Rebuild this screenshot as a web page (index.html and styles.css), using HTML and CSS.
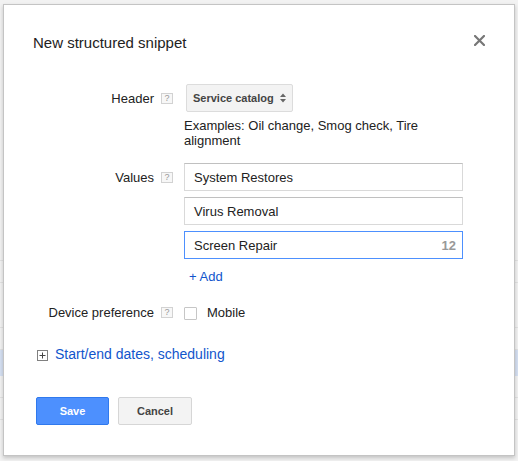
FILE: index.html
```html
<!DOCTYPE html>
<html lang="en">
<head>
<meta charset="utf-8">
<title>New structured snippet</title>
<link rel="stylesheet" href="styles.css">
</head>
<body>
<div class="backdrop">
  <div class="bd-space"></div>
  <div class="bd-row"></div>
  <div class="bd-row"></div>
  <div class="bd-row tall"></div>
  <div class="bd-row"></div>
  <div class="bd-sel"></div>
  <div class="bd-row"></div>
  <div class="bd-row"></div>
</div>

<div class="dialog" role="dialog" aria-label="New structured snippet">
  <div class="dialog-head">
    <h1 class="title">New structured snippet</h1>
    <button class="close" aria-label="Close">
      <svg width="11" height="11" viewBox="0 0 11 11"><path d="M1 1L10 10M10 1L1 10" stroke="#777" stroke-width="2.2" stroke-linecap="square"/></svg>
    </button>
  </div>

  <div class="form">
    <div class="label">Header</div>
    <div class="help"><span class="help-box">?</span></div>
    <div class="field">
      <div class="select">
        <span>Service catalog</span>
        <svg width="6" height="10" viewBox="0 0 6 10"><path d="M0 4L3 0.5L6 4Z M0 6L3 9.5L6 6Z" fill="#666"/></svg>
      </div>
      <div class="examples">Examples: Oil change, Smog check, Tire alignment</div>
    </div>

    <div class="label">Values</div>
    <div class="help"><span class="help-box">?</span></div>
    <div class="field">
      <div class="inputs">
        <div class="input"><span>System Restores</span></div>
        <div class="input"><span>Virus Removal</span></div>
        <div class="input focus"><span>Screen Repair</span><span class="count">12</span></div>
      </div>
      <a class="add" href="#">+ Add</a>
    </div>

    <div class="label">Device preference</div>
    <div class="help"><span class="help-box">?</span></div>
    <div class="field device-field">
      <span class="checkbox"></span>
      <span class="check-label">Mobile</span>
    </div>
  </div>

  <div class="schedule">
    <svg width="11" height="11" viewBox="0 0 11 11"><rect x="0.5" y="0.5" width="10" height="10" fill="#fff" stroke="#808080"/><path d="M2.5 5.5H8.5M5.5 2.5V8.5" stroke="#444" stroke-width="1"/></svg>
    <a class="schedule-link" href="#">Start/end dates, scheduling</a>
  </div>

  <div class="actions">
    <button class="btn save">Save</button>
    <button class="btn cancel">Cancel</button>
  </div>
</div>
</body>
</html>
```

FILE: styles.css
```css
html, body {
  margin: 0;
  padding: 0;
}

body {
  width: 518px;
  height: 461px;
  overflow: hidden;
  position: relative;
  background: #f2f2f2;
  font-family: "Liberation Sans", Arial, sans-serif;
  color: #222;
}

/* faint page content behind the dialog */
.backdrop {
  display: flex;
  flex-direction: column;
  width: 518px;
}
.bd-space {
  height: 239px;
}
.bd-row {
  height: 21px;
  border-bottom: 1px solid #e2e2e2;
}
.bd-row.tall {
  height: 44px;
}
.bd-sel {
  height: 26px;
  background: #d5e0f2;
}

/* dialog */
.dialog {
  position: absolute;
  left: 3px;
  top: 4px;
  width: 512px;
  height: 452px;
  box-sizing: border-box;
  padding: 29px 29px 30px 29px;
  background: #fff;
  border: 1px solid #c4c4c4;
  box-shadow: 0 2px 4px rgba(0, 0, 0, 0.2);
}

.dialog-head {
  display: flex;
  justify-content: space-between;
  align-items: flex-start;
}

.title {
  margin: 0;
  font-size: 15px;
  line-height: 18px;
  font-weight: normal;
  color: #222;
}

.close {
  margin: 1px 0 0 0;
  padding: 0;
  border: 0;
  background: none;
  width: 11px;
  height: 11px;
  display: flex;
}

/* form grid */
.form {
  margin-top: 32px;
  display: grid;
  grid-template-columns: 128px 23px 279px;
  row-gap: 15px;
}

.label {
  height: 28px;
  box-sizing: border-box;
  padding-right: 7px;
  display: flex;
  align-items: center;
  justify-content: flex-end;
  font-size: 13px;
  color: #222;
  white-space: nowrap;
}

.help {
  height: 28px;
  display: flex;
  align-items: center;
}

.help-box {
  width: 10px;
  height: 9px;
  border: 1px solid #d2d2d2;
  background: #f7f7f7;
  color: #999;
  font-size: 9px;
  line-height: 9px;
  display: flex;
  align-items: center;
  justify-content: center;
}

.field {
  display: flex;
  flex-direction: column;
  align-items: flex-start;
}

.select {
  height: 28px;
  box-sizing: border-box;
  margin-left: 2px;
  display: flex;
  align-items: center;
  gap: 6px;
  padding: 0 6px 0 6px;
  border: 1px solid #dcdcdc;
  border-radius: 2px;
  background: #f3f3f3;
  color: #444;
  font-size: 11px;
  font-weight: bold;
}

.examples {
  margin-top: 6px;
  width: 279px;
  font-size: 13px;
  line-height: 15px;
  color: #222;
}

.inputs {
  width: 279px;
  display: flex;
  flex-direction: column;
  gap: 6px;
}

.input {
  height: 28px;
  box-sizing: border-box;
  display: flex;
  align-items: center;
  justify-content: space-between;
  padding: 0 6px 0 9px;
  border: 1px solid #d9d9d9;
  border-top-color: #c0c0c0;
  font-size: 13px;
  color: #222;
  background: #fff;
}

.input.focus {
  border-color: #4d90fe;
}

.count {
  color: #999;
  font-weight: bold;
}

.add {
  margin-top: 11px;
  padding-left: 5px;
  font-size: 13px;
  line-height: 13px;
  color: #15c;
  text-decoration: none;
}

.device-field {
  height: 28px;
  flex-direction: row;
  align-items: center;
  gap: 10px;
}

.checkbox {
  width: 13px;
  height: 13px;
  box-sizing: border-box;
  margin-top: 2px;
  border: 1px solid #c6c6c6;
  border-radius: 1px;
  background: #fff;
}

.check-label {
  font-size: 13px;
  color: #222;
}

/* scheduling link */
.schedule {
  margin-top: 20px;
  margin-left: 4px;
  display: flex;
  align-items: center;
  gap: 7px;
}

.schedule svg {
  margin-top: 1px;
}

.schedule-link {
  font-size: 14px;
  line-height: 17px;
  color: #15c;
  text-decoration: none;
}

/* buttons */
.actions {
  margin-top: 34px;
  margin-left: 3px;
  display: flex;
  gap: 9px;
}

.btn {
  height: 28px;
  box-sizing: border-box;
  padding: 0 8px;
  border: 1px solid;
  border-radius: 2px;
  font-family: "Liberation Sans", Arial, sans-serif;
  font-size: 11px;
  font-weight: bold;
}

.save {
  width: 73px;
  background: #4d90fe;
  border-color: #3079ed;
  color: #fff;
}

.cancel {
  width: 74px;
  background: #f3f3f3;
  border-color: #d6d6d6;
  color: #444;
}
```
